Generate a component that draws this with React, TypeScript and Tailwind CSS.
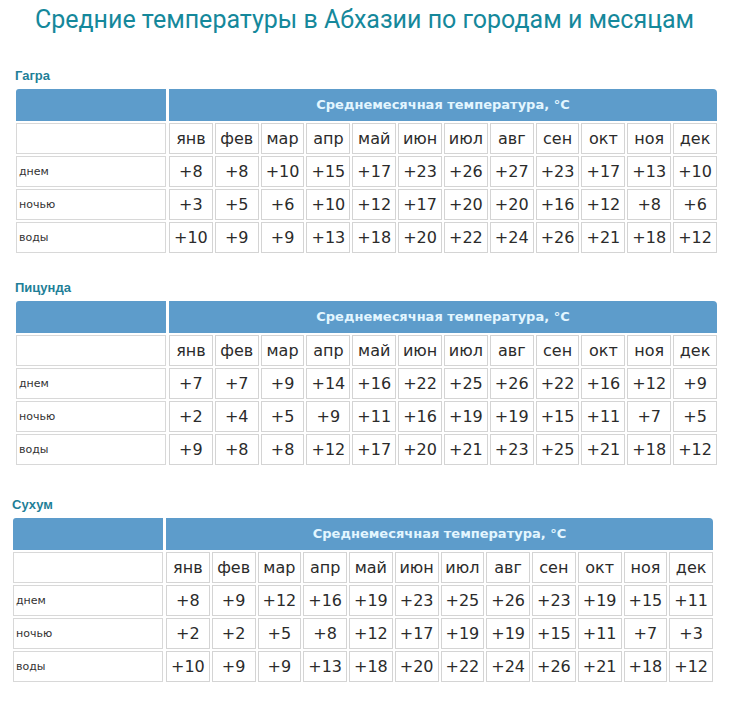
import React from "react";

const months = ["янв", "фев", "мар", "апр", "май", "июн", "июл", "авг", "сен", "окт", "ноя", "дек"];

type City = {
  name: string;
  rows: { label: string; values: string[] }[];
  wrap: string;
};

const cities: City[] = [
  {
    name: "Гагра",
    wrap: "ml-[16px] w-[701px] mt-[26px]",
    rows: [
      { label: "днем", values: ["+8", "+8", "+10", "+15", "+17", "+23", "+26", "+27", "+23", "+17", "+13", "+10"] },
      { label: "ночью", values: ["+3", "+5", "+6", "+10", "+12", "+17", "+20", "+20", "+16", "+12", "+8", "+6"] },
      { label: "воды", values: ["+10", "+9", "+9", "+13", "+18", "+20", "+22", "+24", "+26", "+21", "+18", "+12"] },
    ],
  },
  {
    name: "Пицунда",
    wrap: "ml-[16px] w-[701px] mt-[25px]",
    rows: [
      { label: "днем", values: ["+7", "+7", "+9", "+14", "+16", "+22", "+25", "+26", "+22", "+16", "+12", "+9"] },
      { label: "ночью", values: ["+2", "+4", "+5", "+9", "+11", "+16", "+19", "+19", "+15", "+11", "+7", "+5"] },
      { label: "воды", values: ["+9", "+8", "+8", "+12", "+17", "+20", "+21", "+23", "+25", "+21", "+18", "+12"] },
    ],
  },
  {
    name: "Сухум",
    wrap: "ml-[13px] w-[700px] mt-[30px]",
    rows: [
      { label: "днем", values: ["+8", "+9", "+12", "+16", "+19", "+23", "+25", "+26", "+23", "+19", "+15", "+11"] },
      { label: "ночью", values: ["+2", "+2", "+5", "+8", "+12", "+17", "+19", "+19", "+15", "+11", "+7", "+3"] },
      { label: "воды", values: ["+10", "+9", "+9", "+13", "+18", "+20", "+22", "+24", "+26", "+21", "+18", "+12"] },
    ],
  },
];

const dv = { fontFamily: '"DejaVu Sans", Verdana, sans-serif' };

function CityTable({ city }: { city: City }) {
  return (
    <div className={city.wrap}>
      <div
        className="h-[20px] flex items-center text-[13px] font-bold text-[#1f7f98]"
        style={{ fontFamily: '"Liberation Sans", Arial, sans-serif' }}
      >
        <span className="-ml-[1px]">{city.name}</span>
      </div>
      <div className="mt-[3px] grid grid-cols-[151px_repeat(12,minmax(0,1fr))] gap-y-[2px] gap-x-[2px]" style={dv}>
        <div className="h-[32px] bg-[#5d9ccb] rounded-tl-[3px] mr-[1px]" />
        <div className="col-span-12 h-[32px] bg-[#5d9ccb] rounded-tr-[4px] flex items-center justify-center text-[13px] font-bold text-[#e3f6ff]">
          Среднемесячная температура, °С
        </div>

        <div className="h-[31px] border border-[#d8d8d8] mr-[1px]" />
        {months.map((m) => (
          <div key={m} className="h-[31px] border border-[#d4d4d4] flex items-center justify-center text-[16px] text-[#2b2b2b]">
            {m}
          </div>
        ))}

        {city.rows.map((r) => (
          <React.Fragment key={r.label}>
            <div className="h-[31px] border border-[#d8d8d8] mr-[1px] flex items-center pl-[2px] pt-[1px] text-[11px] text-[#333]">
              {r.label}
            </div>
            {r.values.map((v, i) => (
              <div key={i} className="h-[31px] border border-[#d4d4d4] flex items-center justify-center text-[16px] text-[#2b2b2b]">
                {v}
              </div>
            ))}
          </React.Fragment>
        ))}
      </div>
    </div>
  );
}

export default function App() {
  return (
    <div className="w-[729px] h-[702px] bg-white overflow-hidden">
      <div
        className="h-[40px] flex items-center justify-center text-[25px] text-[#15889b]"
        style={{ fontFamily: 'Roboto, "Noto Sans", sans-serif' }}
      >
        Средние температуры в Абхазии по городам и месяцам
      </div>
      {cities.map((c) => (
        <CityTable key={c.name} city={c} />
      ))}
    </div>
  );
}
